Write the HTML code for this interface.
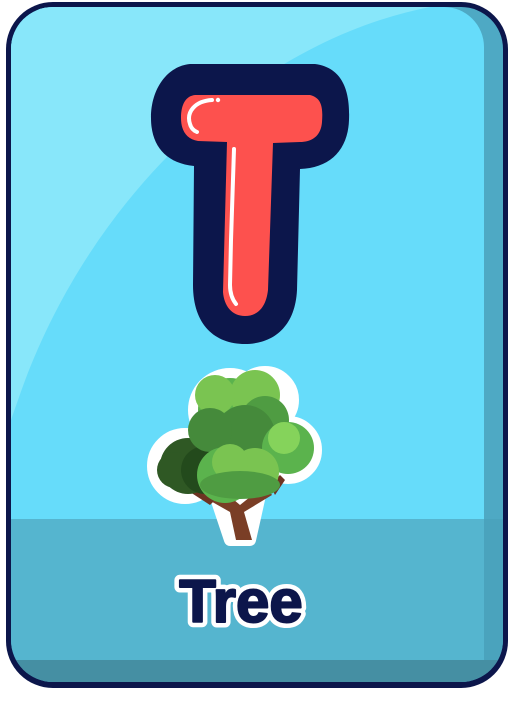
<!DOCTYPE html>
<html><head><style>
html,body{margin:0;padding:0;background:#fff;}
body{width:516px;height:698px;overflow:hidden;}
</style></head><body>
<svg width="516" height="698" viewBox="0 0 516 698" xmlns="http://www.w3.org/2000/svg">
<defs>
<clipPath id="c"><rect x="11" y="7" width="492" height="675" rx="42"/></clipPath>
</defs>
<rect x="6" y="2" width="502" height="686" rx="47" fill="#0c164b"/>
<g clip-path="url(#c)">
<rect x="0" y="0" width="516" height="698" fill="#4ea9c4"/>
<rect x="11" y="7" width="473" height="653" rx="40" fill="#66dcfa"/>
<path d="M11 7 H430 C260 40 90 190 18 400 L11 420 Z" fill="#88e7fa"/>
<rect x="11" y="519" width="473" height="141" fill="#55b5cf"/>
<rect x="0" y="660" width="516" height="40" fill="#458fa3"/>
<rect x="484" y="519" width="30" height="141" fill="#4aa3bd"/>
</g>
<!-- T outline -->
<path d="M190 64 H315 C345 68 350 95 349 120 C348 150 330 168 300 169 L297 290 C295 330 270 344 245 344 C215 344 193 325 193 285 L194 166 C165 163 151 145 151 118 C151 88 168 66 190 64 Z" fill="#0c164b"/>
<!-- T red -->
<path d="M195 95 H310 C322 98 323 108 322 122 C321 136 312 142 300 142 L273 143 L268 290 C266 308 257 316 245 316 C232 316 224 306 223 292 L227 142 L198 141 C186 139 181 130 181 118 C181 104 186 96 195 95 Z" fill="#fd514e"/>
<path d="M212 100 C195 101 186 112 190 124 C191 128 194 131 197 132" fill="none" stroke="#fff" stroke-width="4" stroke-linecap="round"/>
<circle cx="218" cy="100" r="2.2" fill="#fff"/>
<path d="M234 149 L231 240 L230 285 C230 293 232 299 236 304" fill="none" stroke="#fff" stroke-width="4" stroke-linecap="round"/>
<!-- Tree -->
<g stroke="#fff" stroke-width="12" stroke-linejoin="round">
<circle cx="185" cy="466" r="32" fill="#fff"/>
<circle cx="230" cy="410" r="36" fill="#fff"/>
<circle cx="265" cy="400" r="28" fill="#fff"/>
<circle cx="288" cy="450" r="28" fill="#fff"/>
<circle cx="240" cy="470" r="32" fill="#fff"/>
<path d="M215 495 L230 540 L250 540 L260 495 Z" fill="#fff"/>
</g>
<g>
<path d="M200 495 L230 512 L236 540 L252 540 L244 512 L272 495 L265 485 L240 505 L220 488 Z" fill="#7a3e26"/>
<path d="M195 485 L215 500 L210 505 L190 492 Z" fill="#6d3322"/>
<path d="M270 485 L275 495 L285 480 L280 475 Z" fill="#6d3322"/>
<circle cx="188" cy="466" r="28" fill="#2f5824"/>
<circle cx="175" cy="470" r="18" fill="#2f5824"/>
<circle cx="205" cy="470" r="24" fill="#234a1c"/>
<circle cx="230" cy="410" r="32" fill="#5bb34d"/>
<circle cx="255" cy="395" r="25" fill="#7ac451"/>
<circle cx="215" cy="395" r="20" fill="#7ac451"/>
<circle cx="265" cy="420" r="24" fill="#4f9c42"/>
<circle cx="245" cy="435" r="30" fill="#458a3b"/>
<circle cx="210" cy="430" r="22" fill="#458a3b"/>
<circle cx="288" cy="448" r="26" fill="#5bb34d"/>
<circle cx="284" cy="438" r="16" fill="#85d35b"/>
<circle cx="225" cy="475" r="28" fill="#5bb34d"/>
<circle cx="255" cy="472" r="24" fill="#7ac451"/>
<circle cx="230" cy="462" r="18" fill="#7ac451"/>
<ellipse cx="240" cy="485" rx="40" ry="14" fill="#4f9c42"/>
</g>
<text x="241" y="622" text-anchor="middle" font-family="Liberation Sans, sans-serif" font-weight="bold" font-size="60" fill="#0c164b" stroke="#fff" stroke-width="11" stroke-linejoin="round" paint-order="stroke">Tree</text>
<text x="241" y="622" text-anchor="middle" font-family="Liberation Sans, sans-serif" font-weight="bold" font-size="60" fill="#0c164b" stroke="#0c164b" stroke-width="2" stroke-linejoin="round">Tree</text>
</svg>
</body></html>
